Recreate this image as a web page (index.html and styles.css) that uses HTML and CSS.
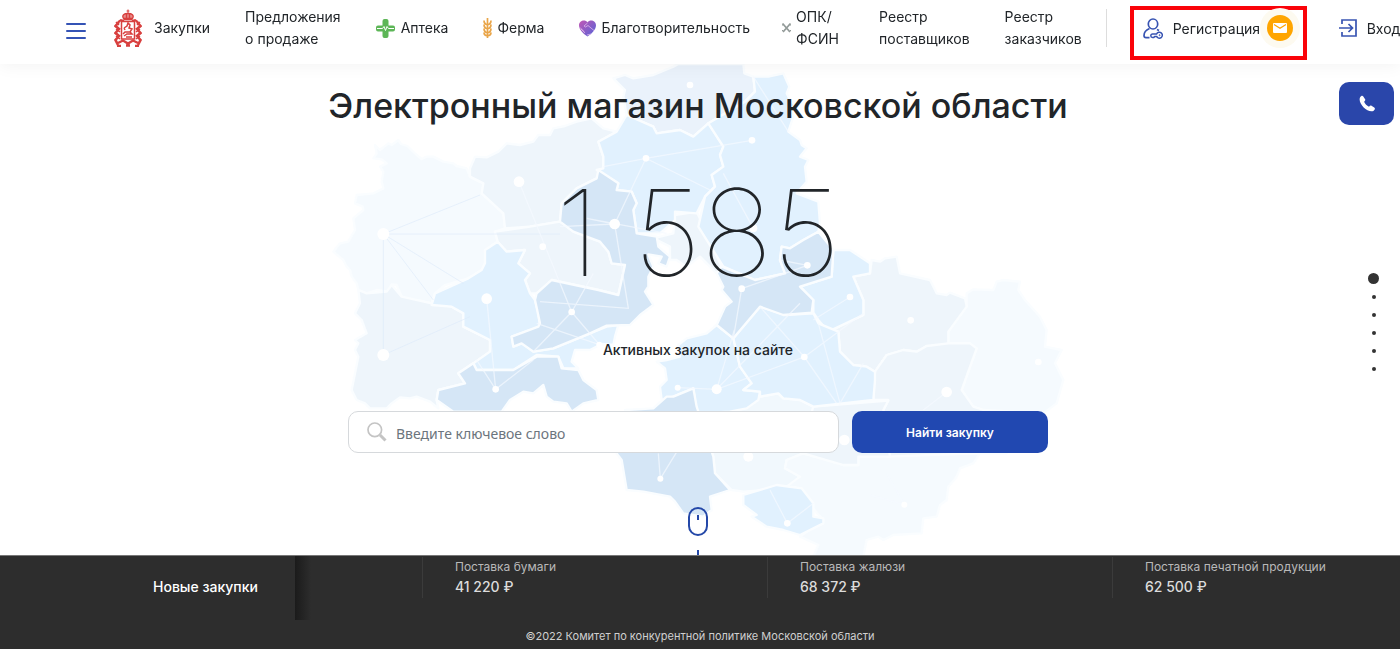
FILE: index.html
```html
<!DOCTYPE html>
<html lang="ru">
<head>
<meta charset="utf-8">
<meta name="viewport" content="width=device-width, initial-scale=1">
<title>Электронный магазин Московской области</title>
<link rel="stylesheet" href="styles.css">
</head>
<body>
<header class="header">
  <button class="burger" type="button" aria-label="Меню"><span></span><span></span><span></span></button>
  <a class="brand" href="#" aria-label="Главная">
    <svg width="28" height="38" viewBox="0 0 28 38" fill="none" stroke="#d8403f" stroke-width="1.3">
      <path d="M14 .5v4M12.6 2h2.8" stroke-width="1"/>
      <path d="M9.5 9.5C7.500 6 10 4.500 14 4.500s6.500 1.500 4.500 5z" fill="#e88a88"/>
      <path d="M12.500 5v4M15.500 5v4M9.500 10.500h9" />
      <rect x="7.500" y="12.500" width="13" height="17.500" stroke-width="1.500"/>
      <path d="M10 12l-3-.8-3 2M18 12l3-.8 3 2" stroke-width="2"/>
      <path d="M5 13l-3.500 4L5 20l-3.500 4L5 27l-3.500 4L4 36M23 13l3.500 4-3.500 3 3.500 4-3.500 3 3.500 4L24 36" stroke-width="2.600"/>
      <path d="M2 13l3 3M2 20l4 3M2 27l4 3M26 13l-3 3M26 20l-4 3M26 27l-4 3" stroke-width="1.500"/>
      <path d="M4 34l5-2.500 5 3 5-3 5 2.500M3 37h4M21 37h4M12 36.500h4" stroke-width="2.400"/>
      <path d="M10 19l3-2 1-3 2 2-1 3 3 1-2 3h-5l-2 2M10 27l3-2h5l-2-2M11 21l-1-2M12 28h6" stroke-width="1.500"/>
    </svg>
  </a>
  <nav class="nav">
    <a href="#">Закупки</a>
    <a href="#">Предложения<br>о продаже</a>
    <a class="with-icon pharmacy" href="#">
      <svg width="19" height="19" viewBox="0 0 19 19"><path d="M6.500 2a2 2 0 0 1 2-2h2a2 2 0 0 1 2 2v4.500H17a2 2 0 0 1 2 2v2a2 2 0 0 1-2 2h-4.500V17a2 2 0 0 1-2 2h-2a2 2 0 0 1-2-2v-4.500H2a2 2 0 0 1-2-2v-2a2 2 0 0 1 2-2h4.500z" fill="#5db657"/><path d="M1 9.500h5.500L8 7.500l1.500 4 1.500-4 1.500 2H18" fill="none" stroke="#fff" stroke-width="1"/></svg>
      Аптека</a>
    <a class="with-icon" href="#">
      <svg width="9" height="22" viewBox="0 0 9 22" fill="none" stroke="#e9a549" stroke-width="1.700"><path d="M4.500 1v20M4.500 8Q1 7 1 3.500M4.500 8Q8 7 8 3.500M4.500 12Q1 11 1 7.500M4.500 12Q8 11 8 7.500M4.500 16Q1 15 1 11.500M4.500 16Q8 15 8 11.500M4.500 19Q1 18.500 1 15.500M4.500 19Q8 18.500 8 15.500"/></svg>
      Ферма</a>
    <a class="with-icon" href="#">
      <svg width="17" height="17" viewBox="0 0 17 17"><defs><linearGradient id="heart" x1="0" y1="0" x2="1" y2="1"><stop offset="0" stop-color="#c257b5"/><stop offset="1" stop-color="#5464d8"/></linearGradient></defs><path d="M8.500 16.500C5 14 0 10 0 5.200 0 .5 6-1.200 8.500 2.200 11-1.200 17 .5 17 5.200 17 10 12 14 8.500 16.500z" fill="url(#heart)"/><path d="M1 7.500l4 4M2 9l4 4M8.500 3L5 6l1.500 1L9 5.500l6 5M8 15l4-1" fill="none" stroke="#e2b8ec" stroke-width=".8"/></svg>
      Благотворительность</a>
    <a class="with-icon defence" href="#">
      <svg width="9" height="10" viewBox="0 0 9 10" fill="none" stroke="#929a98" stroke-width="1.800"><path d="M1 1l7 8M8 1L1 9"/><path d="M0 3V1h2M7 1h2v2M0 7l2 2M9 7L7 9" stroke-width="1"/></svg>
      <span>ОПК/<br>ФСИН</span></a>
    <a href="#">Реестр<br>поставщиков</a>
    <a href="#">Реестр<br>заказчиков</a>
  </nav>
  <div class="account">
    <a class="register" href="#">
      <svg width="20" height="21" viewBox="0 0 20 21" fill="none" stroke="#3854b2" stroke-width="1.700"><ellipse cx="10" cy="6" rx="4.700" ry="5"/><path d="M6.500 10.500C3 12 1 14 1 17.500c0 1.400.6 2.200 2 2.200h3.500M14 11.500l2 1"/><path d="M13.600 16H9.500a1.700 1.700 0 0 0 0 3.400h1.300l1-1h1.800a3 3 0 1 0 0-2.400z" stroke-width="1.500"/><circle cx="16.600" cy="17.200" r=".5" stroke-width="1"/></svg>
      Регистрация
      <span class="mail"><svg width="14" height="10" viewBox="0 0 14 10"><rect width="14" height="10" rx="1" fill="#fff"/><path d="M1 1.500l6 3.800 6-3.800" fill="none" stroke="#ffa500" stroke-width="1.300"/></svg></span>
    </a>
    <a class="login" href="#">
      <svg width="18" height="18" viewBox="0 0 18 18" fill="none" stroke="#3854b2" stroke-width="1.700"><path d="M3 5V1h14v16H3v-4M0 9h13M9.500 5L13.500 9l-4 4"/></svg>
      Вход</a>
  </div>
</header>

<main class="hero">
  <svg class="map" viewBox="0 12 2280 1473" aria-hidden="true">
    <g stroke="#fafdff" stroke-width="7" stroke-linejoin="round">
      <g fill="#f5fafe">
        <path d="M165 255L180 270 205 250 215 255 235 240 243 252 262 258 290 285 305 297 320 290 340 290 370 305 400 310 410 318 440 325 450 350 490 370 485 400 550 460 555 505 525 515 533 545 495 570 495 610 485 630 445 655 375 675 345 700 335 730 300 722 270 722 245 710 230 675 215 673 205 695 170 690 140 700 115 690 110 670 95 650 90 630 80 620 70 600 40 575 60 550 85 545 105 510 100 475 130 450 128 440 105 430 110 405 160 400 190 385 185 365 190 335 180 320 200 310 185 298 160 295 170 280z"/>
        <path d="M1940 700L1960 688 2020 690 2030 665 2050 660 2100 665 2095 690 2115 720 2160 770 2180 810 2175 860 2225 870 2205 910 2230 960 2210 1030 2170 1060 1990 1050 1960 1040 1925 990 1970 865 1950 850 1885 850 1885 815 1940 740z"/>
        <path d="M1235 1050L1320 1010 1375 1000 1390 1015 1440 1020 1480 1040 1705 1020 1690 1050 1720 1190 1615 1190 1615 1215 1570 1215 1450 1180 1400 1200 1395 1225 1440 1250 1400 1285 1270 1295 1235 1290 1185 1240 1180 1190 1130 1060z" fill="#f1f8fd"/>
        <path d="M1400 1200L1450 1180 1570 1215 1615 1215 1615 1190 1980 1180 1960 1210 1920 1225 1910 1250 1885 1280 1880 1320 1860 1335 1850 1370 1810 1375 1805 1420 1720 1425 1690 1440 1675 1430 1640 1440 1630 1490 1480 1490 1495 1455 1440 1430 1510 1380 1475 1340 1445 1285 1400 1280 1440 1250 1395 1225z"/>
      </g>
      <g fill="#eef5fb">
        <path d="M450 325L465 290 500 292 535 275 560 250 600 255 640 245 655 225 690 225 700 205 735 198 770 185 815 175 850 205 890 215 835 245 850 290 850 325 830 355 770 385 725 430 720 485 630 500 555 505 550 460 485 400 490 370 450 350z"/>
        <path d="M880 55L915 45 940 55 1000 45 1060 20 1075 12 1270 12 1273 40 1300 50 1305 95 1275 125 1165 190 1120 230 1080 210 1010 220 1000 200 920 165 910 110 915 90z" fill="#eaf2fb"/>
        <path d="M525 515L630 500 720 485 760 515 840 545 865 575 875 610 915 615 895 705 835 690 695 660 650 700 630 700 615 660 630 640 595 610 615 570 560 575 533 545z"/>
        <path d="M115 690L140 700 200 695 215 675 245 710 335 730 395 740 430 760 430 800 510 840 510 875 460 910 415 940 435 970 355 990 350 1020 355 1045 330 1025 290 1010 270 1015 240 1012 215 1030 200 1045 150 1045 135 1030 110 1020 95 990 115 890 105 870 115 850 105 840 140 820 125 780 105 760 120 730z"/>
        <path d="M1600 650L1650 640 1655 600 1680 605 1695 595 1730 590 1740 640 1830 660 1850 700 1880 705 1890 698 1935 715 1940 740 1885 815 1885 850 1840 862 1820 858 1790 875 1750 870 1700 885 1665 935 1640 920 1600 915 1560 875 1555 815 1525 815 1630 765 1630 720z"/>
        <path d="M1665 935L1700 885 1750 870 1790 875 1820 858 1885 850 1950 850 1970 865 1925 990 1960 1040 1990 1050 2060 1180 1960 1180 1700 1190 1690 1050 1705 1020 1660 1020z"/>
        <path d="M1480 1040L1705 1022 1690 1050 1710 1190 1615 1190 1615 1215 1570 1215 1450 1180 1465 1090z"/>
        <path d="M1000 535L1060 520 1065 465 1130 455 1170 540 1205 620 1190 640 1140 590 1100 620 1070 600 1050 600 1050 560z"/>
      </g>
      <g fill="#e1f1fe">
        <path d="M920 165L1000 200 1010 220 1080 210 1120 230 1165 190 1210 260 1200 285 1210 320 1175 345 1185 380 1155 410 1130 460 1065 455 1065 480 1020 520 950 520 940 450 950 430 935 395 890 390 895 370 830 330 850 325 850 290 835 245 890 215z"/>
        <path d="M1300 50L1345 50 1390 40 1408 80 1400 100 1410 120 1425 135 1410 150 1420 170 1405 215 1440 240 1445 255 1460 265 1440 290 1465 300 1455 320 1460 365 1430 400 1495 425 1500 490 1495 515 1450 540 1410 565 1385 560 1380 600 1395 640 1305 660 1210 620 1135 500 1155 410 1185 380 1175 345 1210 320 1200 285 1210 260 1165 190 1275 125 1305 95z"/>
        <path d="M533 545L560 575 615 570 595 610 630 640 615 660 630 700 645 720 655 760 660 800 575 830 580 860 605 850 640 875 700 865 810 820 860 800 895 795 885 830 880 855 845 852 810 870 765 870 755 905 775 925 730 925 715 890 650 885 580 930 470 930 460 910 510 875 510 840 430 800 430 760 395 740 335 735 345 700 445 655 485 630 495 610 495 570z"/>
        <path d="M1010 905L1040 900 1080 890 1075 855 1100 835 1160 820 1190 795 1240 835 1260 920 1295 970 1270 990 1320 995 1315 1020 1280 1045 1230 1055 1130 1060 1120 985 1060 1010 1025 1020 1020 980 1040 960 1035 925z"/>
        <path d="M1540 570L1590 570 1650 610 1650 640 1600 650 1630 720 1630 765 1525 815 1495 780 1480 758 1480 720 1440 680 1535 650z"/>
        <path d="M1320 740L1395 765 1480 760 1495 790 1555 815 1560 875 1600 915 1640 920 1665 935 1665 960 1660 1020 1480 1040 1440 1020 1390 1015 1375 1000 1320 1010 1320 995 1270 990 1295 970 1260 920 1240 835z"/>
        <path d="M1270 1305L1370 1275 1445 1285 1480 1330 1480 1370 1510 1375 1510 1390 1440 1425 1390 1410 1340 1400 1295 1370 1310 1365 1270 1335z"/>
      </g>
      <g fill="#d5e6f6">
        <path d="M725 430L770 385 830 355 835 330 895 370 890 390 935 395 950 430 940 450 950 520 1010 530 1015 560 1050 590 1040 620 1015 610 1025 590 985 583 1000 620 985 650 985 680 975 695 1000 735 960 765 930 795 860 797 810 820 700 865 640 875 605 850 580 860 575 830 655 800 660 790 645 720 650 700 695 660 835 690 895 705 915 615 875 610 865 575 840 545 760 515 720 485z"/>
        <path d="M415 940L460 910 470 930 580 930 650 890 715 890 725 925 775 930 790 960 830 990 835 1020 790 1030 755 1055 740 1030 700 1025 680 1010 670 975 640 1000 610 995 570 1020 545 1055 400 1055 350 1020 355 990 435 970z"/>
        <path d="M915 1050L1000 1045 1040 1010 1060 1010 1120 985 1130 1040 1180 1190 1185 1240 1230 1290 1170 1310 1175 1350 1150 1370 1090 1360 1065 1325 1050 1310 970 1295 920 1290 905 1200 890 1180 935 1100z"/>
        <path d="M1385 560L1410 565 1450 540 1495 515 1540 570 1535 650 1440 680 1480 720 1475 758 1390 765 1320 740 1240 835 1190 795 1215 740 1235 725 1205 690 1210 680 1190 640 1205 620 1305 660 1395 640 1380 600z"/>
      </g>
    </g>
    <path d="M190 522H720M190 522V885L450 770M190 522L430 670M190 522L340 720M190 522L480 405" stroke="#dceafa" stroke-width="3" fill="none" opacity=".6"/>
    <path d="M1300 50L1405 215M1296 241L978 295 1170 390M978 295L850 320M1210 340L1300 505M978 295L884 492M720 500L884 492 800 475 1040 520M884 492L925 745 660 725M597 365L755 756 820 640M755 756L640 875M755 756L838 854 650 790M500 716L527 988 470 900M527 988L640 900M1021 1256L1015 1180M1021 1256L1080 1160M1073 983L1190 988 1243 810M1265 686L1462 616M1265 686L1240 835M1190 988L1440 730M1190 988L1453 891 1320 740M1453 891L1550 1030M1453 891L1630 760M1495 790L1560 1030 1630 910M1380 600L1462 616M1590 711L1480 780M1880 996L1810 1050M1402 1390L1350 1290M1402 1390L1480 1330M1650 1305L1753 1334 1700 1240" stroke="#f5faff" stroke-width="4" fill="none" opacity=".7"/>
    <g fill="#fff">
      <circle cx="190" cy="522" r="18"/><circle cx="597" cy="365" r="16"/><circle cx="978" cy="295" r="10"/><circle cx="1110" cy="75" r="10"/><circle cx="884" cy="492" r="16"/><circle cx="668" cy="560" r="10"/><circle cx="500" cy="716" r="16"/><circle cx="755" cy="756" r="10"/><circle cx="190" cy="885" r="18"/><circle cx="527" cy="988" r="10"/><circle cx="838" cy="854" r="9"/><circle cx="1073" cy="983" r="9"/><circle cx="1021" cy="1256" r="9"/><circle cx="1296" cy="241" r="10"/><circle cx="1300" cy="505" r="12"/><circle cx="1462" cy="616" r="10"/><circle cx="1265" cy="686" r="10"/><circle cx="1590" cy="711" r="10"/><circle cx="1772" cy="781" r="10"/><circle cx="1453" cy="891" r="10"/><circle cx="1190" cy="988" r="15"/><circle cx="1880" cy="996" r="16"/><circle cx="2155" cy="906" r="10"/><circle cx="1573" cy="1140" r="16"/><circle cx="1285" cy="1190" r="15"/><circle cx="1753" cy="1334" r="9"/><circle cx="1402" cy="1390" r="10"/>
    </g>
  </svg>
  <div class="hero-content">
    <h1 class="title">Электронный магазин Московской области</h1>
    <div class="count">1 585</div>
    <p class="count-label">Активных закупок на сайте</p>
    <form class="search">
      <label class="search-field">
        <svg width="20" height="20" viewBox="0 0 20 20" fill="none" stroke="#c4c4c4"><circle cx="7.800" cy="7.800" r="6.800" stroke-width="1.700"/><path d="M13 13l5.500 5.500" stroke-width="3"/></svg>
        <input type="text" placeholder="Введите ключевое слово" aria-label="Введите ключевое слово">
      </label>
      <button class="search-button" type="button">Найти закупку</button>
    </form>
    <svg class="scroll-hint" width="20" height="48" viewBox="0 0 20 48" fill="none" stroke="#2448a8" stroke-width="2"><rect x="1" y="1" width="18" height="27" rx="9"/><path d="M10 8v5M10 43v5"/></svg>
  </div>
</main>

<button class="phone" type="button" aria-label="Позвонить">
  <svg width="18" height="18" viewBox="0 0 18 18"><path d="M2 2.500C3 .8 4.500.3 5.300 1.500l1.800 2.700c.5.900.1 1.500-1 2.600.9 2.100 2.700 4 4.900 5 1-1.200 1.700-1.500 2.500-1l2.700 1.800c1.200.8.8 2.300-.8 3.300C10 18.500-.5 8.500 2 2.500z" fill="#fff"/></svg>
</button>
<nav class="dots" aria-label="Разделы">
  <a class="current" href="#" aria-label="1"></a><a href="#" aria-label="2"></a><a href="#" aria-label="3"></a><a href="#" aria-label="4"></a><a href="#" aria-label="5"></a><a href="#" aria-label="6"></a>
</nav>

<footer class="footer">
  <section class="fresh">
    <h2 class="fresh-title">Новые закупки</h2>
    <div class="ticker">
      <a class="lot" href="#">Поставка бумаги<strong>41 220 ₽</strong></a>
      <a class="lot" href="#">Поставка жалюзи<strong>68 372 ₽</strong></a>
      <a class="lot" href="#">Поставка печатной продукции<strong>62 500 ₽</strong></a>
    </div>
  </section>
  <p class="copyright">©2022 Комитет по конкурентной политике Московской области</p>
</footer>
</body>
</html>
```
FILE: styles.css
```css
* { box-sizing: border-box; }
body {
  margin: 0;
  min-height: 100vh;
  display: flex;
  flex-direction: column;
  overflow-x: hidden;
  font-family: Inter, "Liberation Sans", sans-serif;
  font-size: 14px;
  color: #212529;
  background: #fff;
}
a { color: inherit; text-decoration: none; }
svg { flex: none; display: block; }
button { border: 0; padding: 0; font: inherit; cursor: pointer; }

.header {
  height: 64px;
  display: flex;
  align-items: center;
  padding: 0 0 8px 66px;
  white-space: nowrap;
  background: #fff;
  box-shadow: 0 2px 16px rgba(0, 0, 0, .05);
  position: relative;
  z-index: 1;
}
.header > * { flex: none; }
.burger {
  width: 20px;
  margin: 6px 28px 0 0;
  display: grid;
  gap: 5px;
  background: none;
}
.burger span { height: 2px; border-radius: 1px; background: #3453b5; }
.brand { margin-right: 12px; }
.nav { display: flex; align-items: center; gap: 35px; line-height: 22px; }
.with-icon { display: flex; align-items: center; gap: 5px; }
.pharmacy { gap: 6px; }
.defence { width: 62px; margin-left: -3px; }
.account {
  display: flex;
  align-items: center;
  gap: 32px;
  margin-left: 24px;
}
.account::before { content: ""; width: 1px; height: 38px; margin-right: -9px; background: #ddd; }
.register {
  display: flex;
  align-items: center;
  gap: 10px;
  width: 177px;
  height: 54px;
  margin-top: 10px;
  padding: 0 9px 10px;
  border: 4px solid #fa0309;
}
.mail {
  flex: none;
  width: 26px;
  height: 26px;
  margin-left: -3px;
  display: grid;
  place-items: center;
  border-radius: 50%;
  background: #ffa500;
  box-shadow: 0 0 0 7px #fdfaf0;
}
.login { display: flex; align-items: center; gap: 10px; }

.hero {
  flex: 1;
  position: relative;
  display: flex;
  justify-content: center;
  padding-right: 4px;
}
.map {
  position: absolute;
  top: 0;
  left: 50%;
  width: 760px;
  margin-left: -380px;
}
.hero-content {
  position: relative;
  width: 100%;
  max-width: 740px;
  display: flex;
  flex-direction: column;
  align-items: center;
}
.title {
  margin: 20px 0 0;
  font-size: 34px;
  line-height: 44px;
  font-weight: 500;
  white-space: nowrap;
}
.count { margin-top: 32px; font-size: 120px; line-height: 146px; font-weight: 100; }
.count-label { margin: 34px 0 0; line-height: 20px; font-weight: 500; }
.search { display: flex; gap: 13px; width: 700px; max-width: 100%; margin-top: 51px; }
.search-field {
  flex: 1;
  height: 42px;
  display: flex;
  align-items: center;
  gap: 9px;
  padding: 0 18px;
  border: 1px solid #d6d9dc;
  border-radius: 10px;
  background: #fff;
}
.search-field input {
  flex: 1;
  border: 0;
  padding: 2px 0 0;
  outline: 0;
  font: 14px "Noto Sans", sans-serif;
  color: #212529;
  background: none;
}
.search-field input::placeholder { color: #6c757d; opacity: 1; }
.search-button {
  width: 196px;
  border-radius: 10px;
  font-size: 12px;
  font-weight: 600;
  color: #fff;
  background: #2148b1;
}
.scroll-hint { margin-top: 54px; }

.phone {
  position: fixed;
  top: 82px;
  right: 6px;
  width: 55px;
  height: 43px;
  display: grid;
  place-items: center;
  border-radius: 10px;
  background: #2a46aa;
}
.dots {
  position: fixed;
  top: 273px;
  right: 21px;
  display: grid;
  justify-items: center;
  gap: 14px;
}
.dots a { width: 4px; height: 4px; border-radius: 50%; background: #333; }
.dots .current { width: 11px; height: 11px; margin-bottom: -3px; }

.footer { background: #2d2d2d; color: #d0d0d0; border-top: 1px solid #777; }
.fresh { display: flex; height: 64px; }
.fresh-title {
  flex: none;
  width: 295px;
  margin: 0;
  padding-left: 153px;
  font-size: 14px;
  line-height: 62px;
  font-weight: 500;
  color: #fff;
}
.ticker {
  flex: 1;
  display: flex;
  align-items: flex-start;
  overflow: hidden;
  padding: 1px 0 0 127px;
  background: linear-gradient(90deg, #1b1b1b, #2d2d2d 16px);
}
.lot {
  flex: 0 0 345px;
  height: 41px;
  padding-left: 32px;
  border-left: 1px solid #3b3b3b;
  font-size: 12px;
  line-height: 20px;
  color: #b9b9b9;
}
.lot strong { display: block; font-size: 14px; font-weight: 500; color: #dcdcdc; }
.copyright { margin: 0; padding-top: 2px; font-size: 11px; line-height: 28px; text-align: center; }
```
